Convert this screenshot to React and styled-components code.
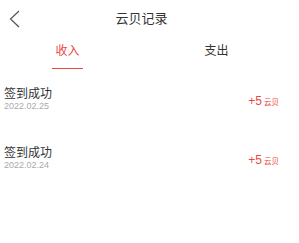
import React, { useState } from 'react';
import styled, { createGlobalStyle } from 'styled-components';

const GlobalStyle = createGlobalStyle`
  html, body {
    margin: 0;
    padding: 0;
    background: #ffffff;
  }
  body {
    font-family: 'Liberation Sans', 'Noto Sans CJK SC', sans-serif;
  }
`;

const records = {
  income: [
    { title: '签到成功', date: '2022.02.25', amount: '+5' },
    { title: '签到成功', date: '2022.02.24', amount: '+5' },
  ],
  expense: [],
};

function App() {
  const [tab, setTab] = useState('income');

  return (
    <Page>
      <GlobalStyle />
      <Header>
        <BackButton aria-label='back'>
          <svg width='11' height='18' viewBox='0 0 11 18'>
            <polyline
              points='10,1 1.5,9 10,17'
              fill='none'
              stroke='#555'
              strokeWidth='1.2'
            />
          </svg>
        </BackButton>
        <Title>云贝记录</Title>
        <span />
      </Header>

      <Tabs>
        <Tab onClick={() => setTab('income')}>
          <TabLabel active={tab === 'income'}>收入</TabLabel>
          <Indicator active={tab === 'income'} />
        </Tab>
        <Tab onClick={() => setTab('expense')}>
          <TabLabel active={tab === 'expense'}>支出</TabLabel>
          <Indicator active={tab === 'expense'} />
        </Tab>
      </Tabs>

      <List>
        {records[tab].map((item, i) => (
          <Row key={i}>
            <Info>
              <RowTitle>{item.title}</RowTitle>
              <RowDate>{item.date}</RowDate>
            </Info>
            <Amount>
              {item.amount}
              <Unit>云贝</Unit>
            </Amount>
          </Row>
        ))}
      </List>
    </Page>
  );
}

export default App;

const Page = styled.div`
  width: 299px;
  height: 243px;
  background: #ffffff;
  overflow: hidden;
`;

const Header = styled.div`
  height: 37px;
  display: grid;
  grid-template-columns: 40px 1fr 56px;
  align-items: center;
`;

const BackButton = styled.div`
  display: flex;
  align-items: center;
  padding-left: 9px;
  padding-top: 1px;
`;

const Title = styled.div`
  text-align: center;
  font-size: 13px;
  line-height: 14px;
  color: #333333;
  padding-top: 1px;
`;

const Tabs = styled.div`
  height: 33px;
  display: grid;
  grid-template-columns: 135px 135px;
  column-gap: 14px;
`;

const Tab = styled.div`
  display: flex;
  flex-direction: column;
  align-items: center;
  justify-content: flex-end;
  cursor: pointer;
`;

const TabLabel = styled.div`
  font-size: 12px;
  line-height: 12px;
  color: ${(p) => (p.active ? '#ea4a3f' : '#333333')};
`;

const Indicator = styled.div`
  width: 31px;
  height: 1px;
  margin-top: 11px;
  margin-bottom: 1px;
  background: ${(p) => (p.active ? '#ea4a3f' : 'transparent')};
`;

const List = styled.div`
  display: flex;
  flex-direction: column;
  gap: 36px;
  padding-top: 18px;
`;

const Row = styled.div`
  display: flex;
  align-items: center;
  justify-content: space-between;
  padding: 0 20px 0 4px;
`;

const Info = styled.div`
  display: flex;
  flex-direction: column;
`;

const RowTitle = styled.div`
  font-size: 12px;
  line-height: 13px;
  color: #333333;
`;

const RowDate = styled.div`
  font-size: 9px;
  line-height: 10px;
  color: #aaaaaa;
`;

const Amount = styled.div`
  font-size: 12px;
  color: #ea4a3f;
  display: flex;
  align-items: baseline;
  gap: 2px;
  padding-top: 2px;
`;

const Unit = styled.span`
  font-size: 7.5px;
`;
